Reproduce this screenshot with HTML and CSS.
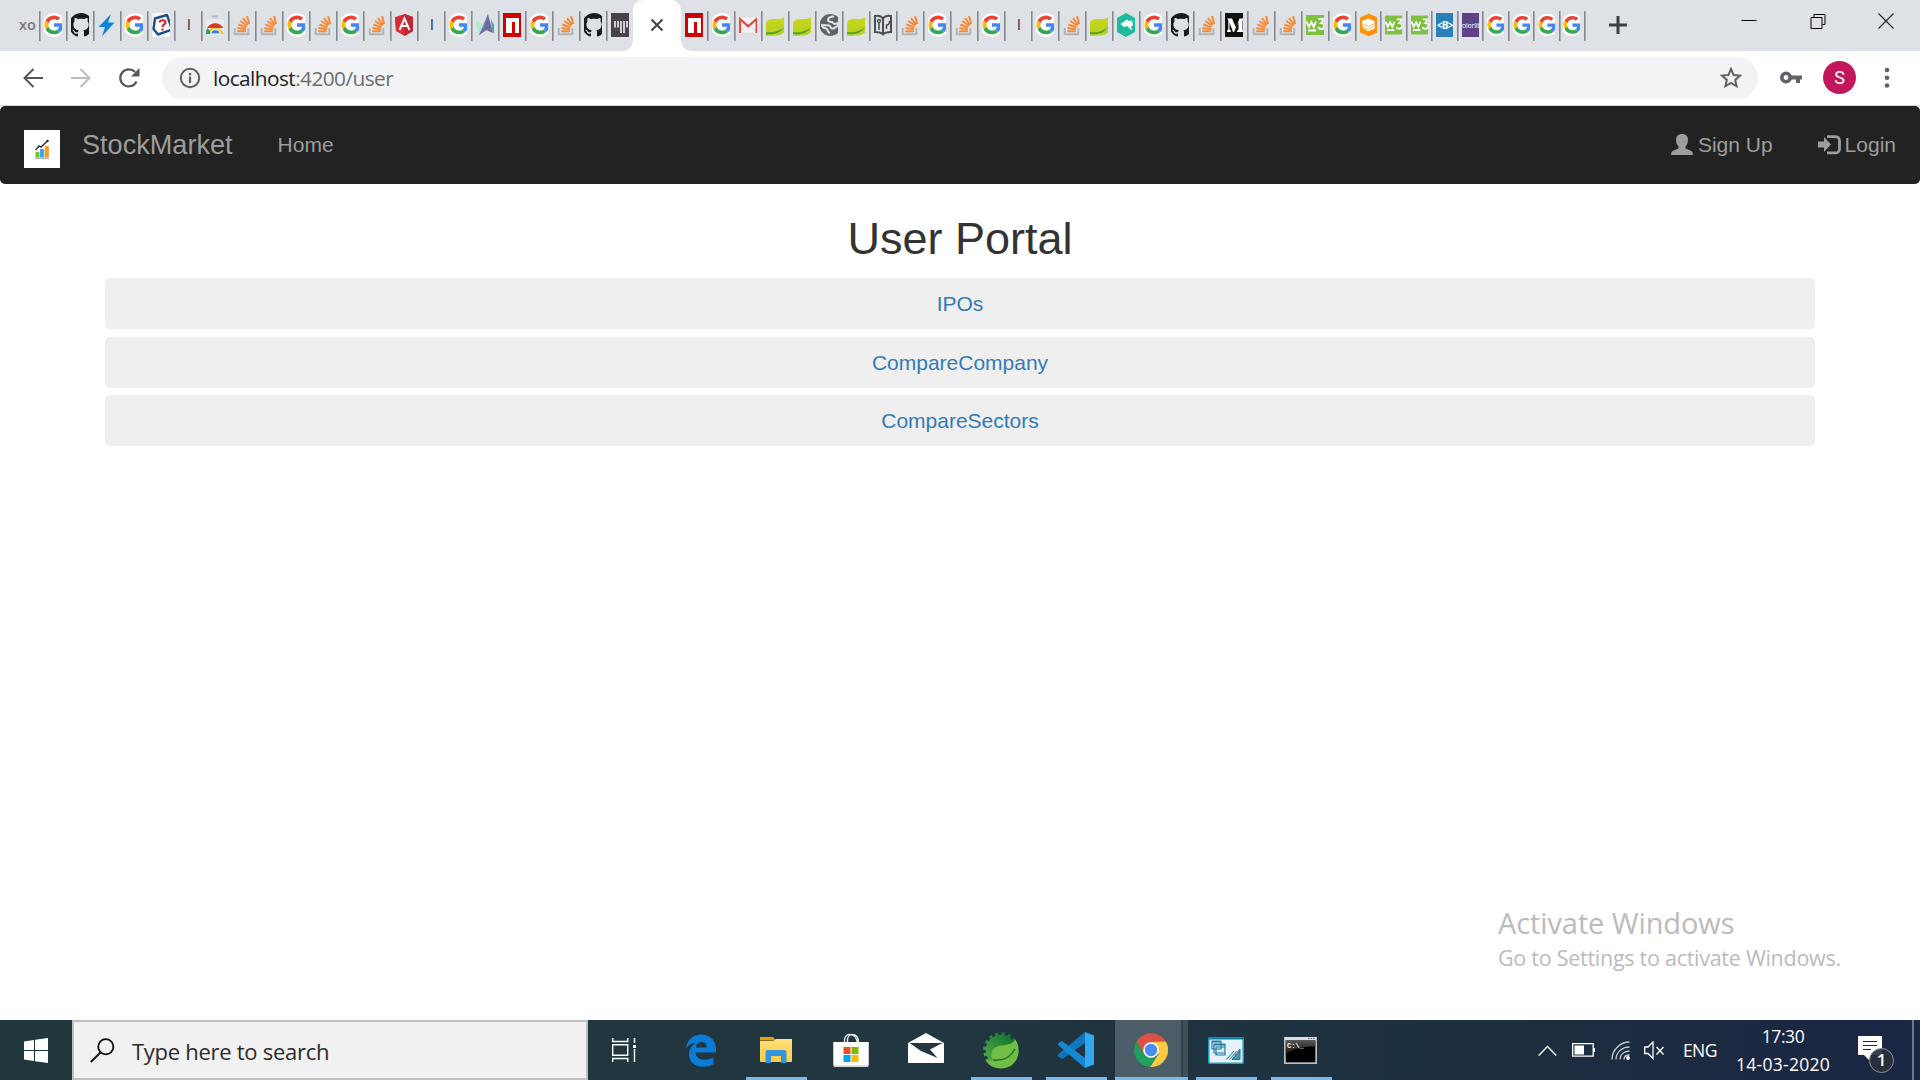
FILE: index.html
```html
<!DOCTYPE html>
<html lang="en">
<head>
<meta charset="utf-8">
<title>StockMarket</title>
<link rel="stylesheet" href="styles.css">
</head>
<body>
<svg class="defs" width="0" height="0" aria-hidden="true">
  <defs>
    <linearGradient id="bagShade" x1="0" y1="0" x2="0" y2="1"><stop offset="0" stop-color="#fff"/><stop offset="1" stop-color="#d9dbdd"/></linearGradient>
    <linearGradient id="leafShade" x1="0" y1="0" x2="0" y2="1"><stop offset="0" stop-color="#c8d816"/><stop offset="1" stop-color="#b4cf26"/></linearGradient>
    <linearGradient id="gearShade" x1="0" y1="1" x2="1" y2="0"><stop offset="0" stop-color="#56b146"/><stop offset="1" stop-color="#0c6b2f"/></linearGradient>
    <linearGradient id="folderShade" x1="0" y1="0" x2="0" y2="1"><stop offset="0" stop-color="#ffe07a"/><stop offset="1" stop-color="#fccb45"/></linearGradient>
    <linearGradient id="cmdShade" x1="0" y1="0" x2="0" y2="1"><stop offset="0" stop-color="#555"/><stop offset="1" stop-color="#111"/></linearGradient>
    <g id="google">
      <circle cx="12" cy="12" r="11.8" fill="#fff"/>
      <g transform="translate(2.5 2.4) scale(.395)">
        <path fill="#EA4335" d="M24 9.5c3.54 0 6.71 1.22 9.21 3.6l6.85-6.85C35.9 2.38 30.47 0 24 0 14.62 0 6.51 5.38 2.56 13.22l7.98 6.19C12.43 13.72 17.74 9.5 24 9.5z"/>
        <path fill="#4285F4" d="M46.98 24.55c0-1.57-.15-3.09-.38-4.55H24v9.02h12.94c-.58 2.96-2.26 5.48-4.78 7.18l7.73 6c4.51-4.18 7.09-10.36 7.09-17.65z"/>
        <path fill="#FBBC05" d="M10.53 28.59c-.48-1.45-.76-2.99-.76-4.59s.27-3.14.76-4.59l-7.98-6.19C.92 16.46 0 20.12 0 24c0 3.88.92 7.54 2.56 10.78l7.97-6.19z"/>
        <path fill="#34A853" d="M24 48c6.48 0 11.93-2.13 15.89-5.81l-7.73-6c-2.15 1.45-4.92 2.3-8.16 2.3-6.26 0-11.57-4.22-13.47-9.91l-7.98 6.19C6.51 42.62 14.62 48 24 48z"/>
      </g>
    </g>
    <path id="github" fill="#17191c" transform="scale(1.5)" d="M8 0C3.58 0 0 3.58 0 8c0 3.54 2.29 6.53 5.47 7.59.4.07.55-.17.55-.38 0-.19-.01-.82-.01-1.49-2.01.37-2.53-.49-2.69-.94-.09-.23-.48-.94-.82-1.13-.28-.15-.68-.52-.01-.53.63-.01 1.08.58 1.23.82.72 1.21 1.87.87 2.33.66.07-.52.28-.87.51-1.07-1.78-.2-3.64-.89-3.64-3.95 0-.87.31-1.59.82-2.15-.08-.2-.36-1.02.08-2.12 0 0 .67-.21 2.2.82.64-.18 1.32-.27 2-.27s1.36.09 2 .27c1.53-1.04 2.2-.82 2.2-.82.44 1.1.16 1.92.08 2.12.51.56.82 1.27.82 2.15 0 3.07-1.87 3.75-3.65 3.95.29.25.54.73.54 1.48 0 1.07-.01 1.93-.01 2.2 0 .21.15.46.55.38A8.01 8.01 0 0 0 16 8c0-4.42-3.58-8-8-8z"/>
    <path id="bolt" fill="#0f83dc" d="M15 1 2.500 14H9L6 23.500 18.500 9.500H12z"/>
    <g id="quiz">
      <rect x="2" y="0" width="18" height="24" fill="#f4f6f8"/>
      <path d="M5 5.500 17 2l5 14.500L8 21.500 3.500 16z" fill="#fff" stroke="#1c4f8c" stroke-width="2.400" stroke-linejoin="round"/>
      <path d="M9.500 9.500c0-3 6-3 6 0 0 2-3 1.800-3 4.500M12.500 15.500v2" fill="none" stroke="#dc1f26" stroke-width="2.200"/>
    </g>
    <g id="webstore">
      <path d="M8 3.500h6" stroke="#b3b6ba" stroke-width="2"/>
      <path d="M1 6.500h22V21H1z" fill="#e9ebed"/>
      <path d="M2.500 21a9.300 9.300 0 0 1 17.500 0z" fill="#fbc116"/>
      <path d="M3 15a9.500 9.500 0 0 1 16.500 0z" fill="#db3a2c"/>
      <path d="M2 21c0-3 .5-5 1.500-6L8 21z" fill="#26a14f"/>
      <path d="M6.800 21a4.700 4.700 0 0 1 9.400 0z" fill="#3f80e4" stroke="#fff" stroke-width="1.200"/>
    </g>
    <g id="overflow" fill="none">
      <path d="M3.700 15v6.300h13.600V15" stroke="#b0b3b7" stroke-width="1.900"/>
      <path d="M6.200 18.300h8.600M6.400 15l8.500 1.200M7.300 11.500l8 2.900M9.200 8l7 4.800M12 5l5 6.800M16 3l2.200 8" stroke="#f58a36" stroke-width="2"/>
    </g>
    <g id="angular">
      <path d="M11.500 1 21.500 4.500 20 18l-8.500 5L3 18 1.500 4.500z" fill="#dd2b33"/>
      <path d="M11.500 1 21.500 4.500 20 18l-8.500 5z" fill="#bf2735"/>
      <path d="m6.500 17 5-11.500L16.500 17M8.500 13h6" fill="none" stroke="#fff" stroke-width="2"/>
    </g>
    <g id="polygon">
      <path d="M2 8l7 3-4 11z" fill="#a6edc8"/><path d="M14 1 5 22l9-6z" fill="#7c80b8"/>
      <path d="M14 1l5 19-7-3-7 5 5-8z" fill="#6a6e9e"/><path d="M17 6l3 6v9l-2-3z" fill="#5f9aa0"/>
    </g>
    <g id="npm"><path fill="#cb0303" d="M0 0h24v24H0z"/><path fill="#fff" d="M5 5h13v15h-4V9h-3v11H5z"/></g>
    <g id="bars"><path fill="#49424c" d="M0 0h24v24H0z"/><path d="M6 8v6.500M9 8v6.500M12 8v12M15 8v12M18 8v6.500" stroke="#fff" stroke-width="1.500"/></g>
    <g id="gmail">
      <path d="M2 4.500h18v15H2z" fill="#f2f2f2"/><path d="m2 19 9-8 9 8" fill="none" stroke="#d5d5d5"/>
      <path d="M3.100 20V6l8 7.300L19.500 6v14" fill="none" stroke="#dc4a3c" stroke-width="2"/>
    </g>
    <g id="spring">
      <path d="M2 11c0-5 5-5 9-5 4 0 7 0 9-2v15c-3 5-11 3-18 4z" fill="url(#leafShade)"/>
      <path d="M2 19c7 1 14-1 18-5-3 6-10 8-18 7z" fill="#5f9e2c"/>
    </g>
    <g id="globe">
      <circle cx="12.500" cy="12" r="11" fill="#5f6368"/>
      <path d="M16 3.500c-3 0-6 1-6 3.500 0 1.500 2 2 4 2 1 0 1 2 3 2l3-1v3c-2 0-3 3-6 2.500-2-.5-1-2.500-3-3-2.500-.6-5 0-7-.500 0 3 2 3 4 3.500 2.500.6 1 4 4 4.500" fill="none" stroke="#dee1e6" stroke-width="2"/>
    </g>
    <g id="book" fill="none" stroke="#4b4d50" stroke-width="2">
      <path d="M3 3c3-.5 6 0 8 2.500 2-2.500 5-3 8-2.500v16c-3 0-6 0-8 2.500-2-2.500-5-2.500-8-2.500zM11 6v14"/>
      <path d="M7 9v8M14.500 16v-4c3 0 3-2 3-4" stroke-width="1.500"/><circle cx="7" cy="8" r="1.500" stroke-width="1.300"/>
    </g>
    <g id="teal"><path fill="#1abc9c" d="m11 0 10 5.500v13L11 24 1 18.500v-13z"/><path fill="#fff" d="M5.500 11 12 6.500l2 1.500 3-.5 1 5-2 1 1 4-5-4.500-3 1z"/></g>
    <g id="medium"><path fill="#12100e" d="M0 0h24v24H0z"/><path d="M4 5.500h5l4 9 3.500-9H21v1.300l-1.500 1v9l1.500 1v1.200h-7v-1.200l1.500-1V9l-4.500 10h-1L6.500 9.500v6.800l1.500 1.500V19H4v-1.200l1.300-1.500V7z" fill="#fff"/></g>
    <g id="w3">
      <path fill="#80c040" d="M0 2h24v20H0z"/>
      <path d="M2.500 8.500 5 14l2.500-5 2.300 5 2.200-5.500M14.500 6h6L17 10c5 0 4 6 0 6-2 0-2.500-1-2.500-2M4 17.500h8" fill="none" stroke="#fff" stroke-width="1.800"/>
    </g>
    <g id="hive"><path fill="#fb960b" d="m11 0 9 4v16l-9 4-9-4V4z"/><path fill="#ff8f0a" d="m11 0 9 4v16l-9 4z"/><path fill="#fff" d="m4 8 7-3 6.500 3v8L11 18.500 5 15.500z"/><path d="m4.500 11 6.500 2.500 6.500-3M5 14.500l6 2 6-3" fill="none" stroke="#ffb54a"/></g>
  </defs>
</svg>

<div class="screen">
  <header class="tabstrip">
    <div class="tab tab-first"><span>xo</span></div>
    <div class="tab"><svg viewBox="2 0 18 24"><use href="#google"/></svg></div>
    <div class="tab"><svg viewBox="2 0 18 24"><use href="#github"/></svg></div>
    <div class="tab"><svg viewBox="2 0 18 24"><use href="#bolt"/></svg></div>
    <div class="tab"><svg viewBox="2 0 18 24"><use href="#google"/></svg></div>
    <div class="tab"><svg viewBox="2 0 18 24"><use href="#quiz"/></svg></div>
    <div class="tab tab-text"><span>l</span></div>
    <div class="tab"><svg viewBox="2 0 18 24"><use href="#webstore"/></svg></div>
    <div class="tab"><svg viewBox="2 0 18 24"><use href="#overflow"/></svg></div>
    <div class="tab"><svg viewBox="2 0 18 24"><use href="#overflow"/></svg></div>
    <div class="tab"><svg viewBox="2 0 18 24"><use href="#google"/></svg></div>
    <div class="tab"><svg viewBox="2 0 18 24"><use href="#overflow"/></svg></div>
    <div class="tab"><svg viewBox="2 0 18 24"><use href="#google"/></svg></div>
    <div class="tab"><svg viewBox="2 0 18 24"><use href="#overflow"/></svg></div>
    <div class="tab"><svg viewBox="2 0 18 24"><use href="#angular"/></svg></div>
    <div class="tab tab-text"><span>l</span></div>
    <div class="tab"><svg viewBox="2 0 18 24"><use href="#google"/></svg></div>
    <div class="tab"><svg viewBox="2 0 18 24"><use href="#polygon"/></svg></div>
    <div class="tab"><svg viewBox="2 0 18 24"><use href="#npm"/></svg></div>
    <div class="tab"><svg viewBox="2 0 18 24"><use href="#google"/></svg></div>
    <div class="tab"><svg viewBox="2 0 18 24"><use href="#overflow"/></svg></div>
    <div class="tab"><svg viewBox="2 0 18 24"><use href="#github"/></svg></div>
    <div class="tab tab-before"><svg viewBox="2 0 18 24"><use href="#bars"/></svg></div>
    <div class="tab-active"><svg viewBox="0 0 14 14"><path d="m1.500 1.500 11 11m0-11-11 11" stroke="#45494d" stroke-width="2.200"/></svg></div>
    <div class="tab"><svg viewBox="2 0 18 24"><use href="#npm"/></svg></div>
    <div class="tab"><svg viewBox="2 0 18 24"><use href="#google"/></svg></div>
    <div class="tab"><svg viewBox="2 0 18 24"><use href="#gmail"/></svg></div>
    <div class="tab"><svg viewBox="2 0 18 24"><use href="#spring"/></svg></div>
    <div class="tab"><svg viewBox="2 0 18 24"><use href="#spring"/></svg></div>
    <div class="tab"><svg viewBox="2 0 18 24"><use href="#globe"/></svg></div>
    <div class="tab"><svg viewBox="2 0 18 24"><use href="#spring"/></svg></div>
    <div class="tab"><svg viewBox="2 0 18 24"><use href="#book"/></svg></div>
    <div class="tab"><svg viewBox="2 0 18 24"><use href="#overflow"/></svg></div>
    <div class="tab"><svg viewBox="2 0 18 24"><use href="#google"/></svg></div>
    <div class="tab"><svg viewBox="2 0 18 24"><use href="#overflow"/></svg></div>
    <div class="tab"><svg viewBox="2 0 18 24"><use href="#google"/></svg></div>
    <div class="tab tab-text"><span>l</span></div>
    <div class="tab"><svg viewBox="2 0 18 24"><use href="#google"/></svg></div>
    <div class="tab"><svg viewBox="2 0 18 24"><use href="#overflow"/></svg></div>
    <div class="tab"><svg viewBox="2 0 18 24"><use href="#spring"/></svg></div>
    <div class="tab"><svg viewBox="2 0 18 24"><use href="#teal"/></svg></div>
    <div class="tab"><svg viewBox="2 0 18 24"><use href="#google"/></svg></div>
    <div class="tab"><svg viewBox="2 0 18 24"><use href="#github"/></svg></div>
    <div class="tab"><svg viewBox="2 0 18 24"><use href="#overflow"/></svg></div>
    <div class="tab"><svg viewBox="2 0 18 24"><use href="#medium"/></svg></div>
    <div class="tab"><svg viewBox="2 0 18 24"><use href="#overflow"/></svg></div>
    <div class="tab"><svg viewBox="2 0 18 24"><use href="#overflow"/></svg></div>
    <div class="tab"><svg viewBox="2 0 18 24"><use href="#w3"/></svg></div>
    <div class="tab"><svg viewBox="2 0 18 24"><use href="#google"/></svg></div>
    <div class="tab tab-slim"><svg viewBox="2 0 18 24"><use href="#hive"/></svg></div>
    <div class="tab tab-slim"><svg viewBox="2 0 18 24"><use href="#w3"/></svg></div>
    <div class="tab tab-slim"><svg viewBox="2 0 18 24"><use href="#w3"/></svg></div>
    <div class="tab tab-slim"><span class="chip chip-b">&lt;B&gt;</span></div>
    <div class="tab tab-slim"><span class="chip chip-c">colorlib</span></div>
    <div class="tab tab-slim"><svg viewBox="2 0 18 24"><use href="#google"/></svg></div>
    <div class="tab tab-slim"><svg viewBox="2 0 18 24"><use href="#google"/></svg></div>
    <div class="tab tab-slim"><svg viewBox="2 0 18 24"><use href="#google"/></svg></div>
    <div class="tab tab-slim"><svg viewBox="2 0 18 24"><use href="#google"/></svg></div>
    <svg class="new-tab" viewBox="0 0 18 18"><path d="M9 0v18M0 9h18" stroke="#3c4043" stroke-width="3"/></svg>
    <div class="window-buttons">
      <svg viewBox="0 0 15 16"><path d="M0 7.500h15" stroke="#000"/></svg>
      <svg viewBox="0 0 15 16"><path d="M.5 4.500h11v11H.5zM3.500 4V1.500h11v10H12" fill="none" stroke="#000"/></svg>
      <svg viewBox="0 0 15 16"><path d="m0 .5 15 15m0-15-15 15" stroke="#222" stroke-width="1.100"/></svg>
    </div>
  </header>

  <div class="toolbar">
    <svg class="nav-icon" viewBox="0 0 20 20"><path d="M20 10H1.500M10.500 1 1.500 10l9 9" fill="none" stroke="#54585c" stroke-width="2"/></svg>
    <svg class="nav-icon" viewBox="0 0 20 20"><path d="M0 10h18.500M9.500 1l9 9-9 9" fill="none" stroke="#babcbe" stroke-width="2"/></svg>
    <svg class="nav-icon" viewBox="0 0 20 20"><path d="M17.500 13.500A8.500 8.500 0 1 1 16 4.100" fill="none" stroke="#54585c" stroke-width="2.200"/><path d="M20.500 0v8.500H12z" fill="#54585c"/></svg>
    <div class="omnibox">
      <svg class="info" viewBox="0 0 22 22"><circle cx="11" cy="11" r="9.200" fill="none" stroke="#5f6368" stroke-width="2"/><path d="M11 9.500V16M11 6v2.200" stroke="#5f6368" stroke-width="2.200"/></svg>
      <span class="url">localhost<span class="url-path">:4200/user</span></span>
      <svg class="star" viewBox="0 0 22 21"><path d="m11 2 2.600 6 6.400.6-4.800 4.300 1.400 6.300L11 15.900l-5.600 3.300 1.400-6.300L2 8.600 8.400 8z" fill="none" stroke="#5f6368" stroke-width="2"/></svg>
    </div>
    <svg class="key" viewBox="0 0 22 13"><circle cx="6" cy="6.500" r="4.200" fill="none" stroke="#5f6368" stroke-width="3.600"/><path d="M10 4.500h12v4h-2V12h-4V8.500h-6z" fill="#5f6368"/></svg>
    <div class="avatar">S</div>
    <svg class="dots" viewBox="0 0 6 22"><g fill="#5f6368"><circle cx="3" cy="3" r="2.300"/><circle cx="3" cy="10.800" r="2.300"/><circle cx="3" cy="18.500" r="2.300"/></g></svg>
  </div>

  <nav class="navbar">
    <svg class="logo" viewBox="0 0 36 38">
      <path fill="#fff" d="M0 0h36v38H0z"/><path fill="#7cc31e" d="M11.500 22h4v5.500h-4z"/><path fill="#39a8ee" d="M16 19h4.200v8.500H16z"/><path fill="#fb9a15" d="M20.800 16h4v11.500h-4z"/>
      <path d="M11 28.300h14" stroke="#a9adb1" stroke-width="1.200"/><path d="m11.500 20 3.500-4 2 1 6.500-6" fill="none" stroke="#26354a" stroke-width="1.500"/><circle cx="23.500" cy="11" r="1.300" fill="#26354a"/>
    </svg>
    <a class="brand">StockMarket</a>
    <a class="home">Home</a>
    <a class="signup"><svg class="user-icon" viewBox="0 0 22 21"><path d="M11 0c4 0 6 2.500 6 6 0 3-1.200 5-2.500 6.500v1.800c2 1.500 7 2.300 7.300 4.700v2H.2v-2c.3-2.400 5.300-3.200 7.300-4.700v-1.800C6.200 11 5 9 5 6c0-3.500 2-6 6-6z" fill="#9d9d9d"/></svg>Sign Up</a>
    <a class="login"><svg class="login-icon" viewBox="0 0 23 20"><path d="M0 6.500h6V2l7 7.500L6 17v-4.500H0z" fill="#9d9d9d"/><path d="M9 1.600h8.500a4 4 0 0 1 4 4v8.300a4 4 0 0 1-4 4H9" fill="none" stroke="#9d9d9d" stroke-width="2.800"/></svg>Login</a>
  </nav>

  <main class="portal">
    <h1>User Portal</h1>
    <ul class="links">
      <li><a>IPOs</a></li>
      <li><a>CompareCompany</a></li>
      <li><a>CompareSectors</a></li>
    </ul>
  </main>

  <div class="watermark">
    <p class="watermark-title">Activate Windows</p>
    <p class="watermark-text">Go to Settings to activate Windows.</p>
  </div>

  <footer class="taskbar">
    <div class="start"><svg width="24" height="25" viewBox="0 0 24 25"><path fill="#fff" d="M0 3.500 10 2v10H0zM11 1.800 24 0v12H11zM0 13h10v10L0 21.500zM11 13h13v12l-13-1.800z"/></svg></div>
    <div class="search">
      <svg width="25" height="25" viewBox="0 0 25 25"><circle cx="15.800" cy="8.800" r="7.600" fill="none" stroke="#111" stroke-width="1.800"/><path d="M10.500 14.500.8 24" stroke="#111" stroke-width="1.900"/></svg>
      <span>Type here to search</span>
    </div>
    <div class="task-view"><svg width="25" height="24" viewBox="0 0 25 24"><path d="M.7 0v3.500h15V0M.7 24v-3.500h15V24M.7 6.800h15v10.400H.7zM22.500 0v5M22.500 11v13" fill="none" stroke="#fff" stroke-width="1.400"/><path fill="#fff" d="M21 7h3v3h-3z"/></svg></div>

    <div class="app"><svg width="32" height="33" viewBox="0 0 32 33"><path fill="#0a7cd8" d="M1 14.500C2 5.500 8.500.5 16 .5c9.500 0 15 6.500 15 14.500v3.500H10.500c.3 5 4.500 7.200 9 7.200 3.800 0 6.500-1 8.800-2.400v7c-3 1.700-6.300 2.500-10.300 2.500C9.500 32.800 4 27.500 4 20.500 4 15 7 11 11.500 8.800 7 9 3.500 11 1 14.500zM10.800 13.500h11C21.800 10 20 8 16.500 8s-5.400 2.500-5.700 5.500z"/></svg></div>
    <div class="app open"><svg width="32" height="28" viewBox="0 0 32 28"><path fill="#e3a008" d="M0 1h13l3 3.500H0z"/><path fill="url(#folderShade)" d="M0 5h13l3-2h16v22a1 1 0 0 1-1 1H1a1 1 0 0 1-1-1z"/><path fill="#3795dd" d="M5.500 16a2 2 0 0 1 2-2h17a2 2 0 0 1 2 2v11H21v-7h-10v7H5.500z"/></svg></div>
    <div class="app"><svg width="36" height="34" viewBox="0 0 36 34"><path d="M11.500 10V7c0-3 2-5.500 5-5.500s7 2 8 8M14.500 10V7c0-3 2-5.500 4.500-5.500 4 0 6.500 3 6.500 8" fill="none" stroke="#e6e8e9" stroke-width="1.400"/><path fill="url(#bagShade)" d="M.5 9h35v24a1 1 0 0 1-1 1h-33a1 1 0 0 1-1-1z"/><path fill="#fff" d="M.5 9h35v23H.5z"/><path fill="#f25022" d="M10.500 14h7v7h-7z"/><path fill="#7fba00" d="M18.500 14h7v7h-7z"/><path fill="#00a4ef" d="M10.500 22h7v7h-7z"/><path fill="#ffb900" d="M18.500 22h7v7h-7z"/></svg></div>
    <div class="app mail"><svg width="36" height="30" viewBox="0 0 36 30"><path fill="#fff" d="M0 10 18 0l18 10v20H0z"/><path fill="#223740" d="M1.500 10h33L22 16.500l7.500 8.500L13 18z"/></svg></div>
    <div class="app open"><svg width="36" height="37" viewBox="0 0 36 37"><circle cx="18" cy="18" r="15.300" fill="url(#gearShade)"/><circle cx="18" cy="18" r="16.300" fill="none" stroke="url(#gearShade)" stroke-width="3" stroke-dasharray="3.200 3.200"/><path fill="#72bd44" d="M2 27c2 5 8 9.500 16 9.500 10 0 17.500-7 17.500-18 0-5-1-8-3.500-11C28 17 10 9 8.500 22c-.4 3 .5 5 1.500 6-3 1-6 1-8-1z"/><path d="M10 28c10 1 18-3 22-11" fill="none" stroke="#1a7936" stroke-width="1.600"/></svg></div>
    <div class="app open"><svg width="36" height="36" viewBox="0 0 36 36"><path fill="#1176bd" d="M27 0v11L4.500 27 0 24.500v-2z"/><path fill="#1688d2" d="m4 9 23 17v10L0 13v-1.500z"/><path fill="#30a8f1" d="m27 0 9 3.500v29L27 36z"/></svg></div>
    <div class="app open current"><svg width="34" height="34" viewBox="0 0 34 34"><path fill="#e04f43" d="M2.500 8.500a17 17 0 0 1 29.200 0L17 9.500 9.500 21z"/><path fill="#fccb44" d="M31.700 8.500A17 17 0 0 1 16 34l8.500-13L17 9z"/><path fill="#1fa15d" d="M2.500 8.500A17 17 0 0 0 16 34l6-10-12-2z"/><circle cx="17" cy="17" r="7.800" fill="#fff"/><circle cx="17" cy="17" r="6.200" fill="#4c8bf5"/></svg></div>
    <div class="app open"><svg width="36" height="27" viewBox="0 0 36 27"><rect x=".8" y=".8" width="34.400" height="25.400" rx="1" fill="#e5f3f8" stroke="#219fc4" stroke-width="1.600"/><path d="M.8 1.500h34.400" stroke="#087da5" stroke-width="2"/><g fill="#dcebf2" stroke="#277fa4" stroke-width="1.200"><path d="M4 4h9v8H4zM4 5h9M6 7h11v9H6zM6 8h11M8 10h9v8H8z"/></g><path d="M18.500 22.500 26 14M21.500 22.500l7-8M24 22.500h8V12z" fill="#4b91b2" stroke="#247499"/></svg></div>
    <div class="app open"><svg width="33" height="27" viewBox="0 0 33 27"><path fill="#b8bcc0" d="M0 0h33v27H0z"/><path fill="#ddd" d="M1 0h31v3H1z"/><path d="M24 1.500h7" stroke="#667" stroke-dasharray="1.500 1"/><path fill="#000" d="M1.800 3.500h29.500v21.800H1.800z"/><path fill="url(#cmdShade)" d="M1.800 3.500h29.500v6C18 9.500 7 12 1.800 18z"/><text x="3" y="10.500" class="prompt">C:\_</text></svg></div>

    <div class="tray">
      <svg class="chevron" width="19" height="11" viewBox="0 0 19 11"><path d="m.7 10.500 8.800-9 8.800 9" fill="none" stroke="#fff" stroke-width="1.300"/></svg>
      <svg class="battery" width="23" height="14" viewBox="0 0 23 14"><path d="M.7.7h20.500v12.500H.7zM22.500 5v4" fill="none" stroke="#fff" stroke-width="1.300"/><path fill="#fff" d="M2.500 2.500H12v9H2.500z"/></svg>
      <svg class="wifi" width="19" height="19" viewBox="0 0 19 19"><g fill="none" stroke="#c7ccd2" stroke-width="1.300"><path d="M1 18.500C1 9 9 1 18.500 1M5 18.500C5 11.500 11 6 18.500 6M9 18.500c0-5 4-8.500 9.500-8.500M13 18.500c0-3 2-4.500 5.500-4.500"/></g><circle cx="17" cy="17" r="1.900" fill="#fff"/></svg>
      <svg class="speaker" width="21" height="19" viewBox="0 0 21 19"><path d="M.7 6v6.500H4l5 5V1L4 6zM12.500 6l7 7.500m0-7.500-7 7.500" fill="none" stroke="#fff" stroke-width="1.300"/></svg>
      <span class="lang">ENG</span>
      <div class="clock"><span>17:30</span><span class="date">14-03-2020</span></div>
      <div class="notify">
        <svg width="24" height="24" viewBox="0 0 24 24"><path fill="#fff" d="M0 0h24v19H13l-2 5-5-5H0z"/><path d="M5 5.500h14M5 9.500h14M5 13.500h8" stroke="#1c2943" stroke-width="1.200"/></svg>
        <span class="badge">1</span>
      </div>
      <div class="peek"></div>
    </div>
  </footer>
</div>
</body>
</html>
```
FILE: styles.css
```css
* { box-sizing: border-box; }
body { margin: 0; background: #fff; font-family: "Liberation Sans", Arial, sans-serif; }
svg { display: block; flex: none; }
.defs { position: absolute; }
.screen { position: relative; display: flex; flex-direction: column; width: 1920px; height: 1080px; overflow: hidden; }

/* Tab strip */
.tabstrip { display: flex; align-items: flex-start; height: 51px; flex: none; background: #dee1e6; }
.tab { width: 27px; height: 30px; margin-top: 11px; padding: 2px 0 0 3.900px; flex: none; border-right: 1px solid #84888c; box-shadow: 1px 0 #a9acb1; overflow: hidden; }
.tab svg { width: 18px; height: 24px; overflow: hidden; }
.tab-first { width: 40px; padding: 0 0 0 19px; color: #77797c; font: 600 14.500px/27px "Open Sans", sans-serif; }
.tab-text { padding: 0 0 0 12px; color: #24324a; font: 15px/26px "Open Sans", sans-serif; }
.tab-text span { display: block; width: 4px; overflow: hidden; }
.tab-before { width: 26px; border: 0; box-shadow: none; }
.tab-slim { width: 25.44px; }
.tab-slim svg { width: 17px; }
.tab-active { position: relative; display: flex; justify-content: center; width: 48px; height: 51px; padding-top: 18px; flex: none; background: #fff; border-radius: 10px 10px 0 0; }
.tab-active svg { width: 14px; height: 14px; }
.tab-active::before, .tab-active::after { content: ""; position: absolute; bottom: 0; width: 10px; height: 10px; }
.tab-active::before { left: -10px; background: radial-gradient(circle at 0 0, transparent 9.5px, #fff 10px); }
.tab-active::after { right: -10px; background: radial-gradient(circle at 100% 0, transparent 9.5px, #fff 10px); }
.chip { display: flex; justify-content: center; align-items: center; width: 17px; height: 24px; overflow: hidden; color: #fff; }
.chip-b { background: #2a80b9; font: bold 10px "Open Sans", sans-serif; letter-spacing: -.8px; }
.chip-c { background: #5f4187; font: 7px "Open Sans", sans-serif; letter-spacing: -.2px; }
.new-tab { width: 18px; height: 18px; margin: 16px 0 0 24px; }
.window-buttons { display: flex; gap: 52.500px; margin: 13px 26px 0 auto; }
.window-buttons svg { width: 16px; height: 16px; }

/* Toolbar */
.toolbar { display: flex; align-items: center; height: 55px; padding: 0 30px 1px 23px; flex: none; border-bottom: 1px solid #d3d5d8; }
.nav-icon { width: 20px; height: 20px; margin-right: 28px; overflow: visible; }
.omnibox { display: flex; align-items: center; width: 1596px; height: 42px; margin-left: -5px; padding: 0 16px 0 16.500px; border-radius: 21px; background: #f1f3f4; }
.info { width: 22px; height: 22px; }
.url { margin: 1px auto 0 12.500px; color: #202124; font: 20.8px/28px "Open Sans", sans-serif; letter-spacing: -.55px; }
.url-path { color: #6b6f73; }
.star { width: 22px; height: 21px; }
.key { width: 22px; height: 13px; margin-left: 22px; }
.avatar { width: 33px; height: 33px; margin-left: 21px; border-radius: 50%; background: #c2185b; color: #fff; text-align: center; font: 18px/33px Roboto, sans-serif; }
.dots { width: 6px; height: 22px; margin-left: auto; }

/* Navbar */
.navbar { display: flex; align-items: center; height: 78px; padding: 0 24px; flex: none; border-radius: 5px; background: #222; color: #9d9d9d; font-size: 21px; line-height: 30px; }
.logo { width: 36px; height: 38px; margin-top: 8px; }
.brand { margin-left: 22px; font-size: 27.1px; }
.home { margin-left: 45px; }
.signup { display: flex; align-items: center; margin-left: auto; }
.user-icon { width: 22px; height: 21px; margin: -2px 5px 0 0; }
.login { display: flex; align-items: center; margin-left: 45px; }
.login-icon { width: 23px; height: 20px; margin-right: 4px; }

/* Page */
.portal { padding: 30px 105px 0; text-align: center; }
h1 { margin: 0 0 15px; color: #333; font-size: 45px; font-weight: 500; line-height: 49px; }
.links { display: flex; flex-direction: column; gap: 7.6px; margin: 0; padding: 0; list-style: none; }
.links li { height: 51px; border-radius: 5px; background: #efefef; color: #337ab7; font-size: 21px; line-height: 52px; }

.watermark { position: absolute; left: 1498px; top: 902px; color: #bbb; font-family: "Open Sans", sans-serif; white-space: nowrap; }
.watermark p { margin: 0; }
.watermark-title { font-size: 29px; line-height: 42px; letter-spacing: -.1px; }
.watermark-text { font-size: 21.5px; line-height: 28px; letter-spacing: -.27px; }

/* Taskbar */
.taskbar { display: flex; height: 60px; margin-top: auto; flex: none; background: linear-gradient(90deg, #21373e, #213640 50%, #1d2f40 78%, #1b2842 92%, #1a2743); font-family: "Open Sans", sans-serif; color: #fff; }
.start { display: flex; justify-content: center; align-items: center; width: 72px; }
.search { display: flex; align-items: center; gap: 17px; width: 516px; padding-left: 16px; border: 2px solid #bebfc0; background: #f1f1f1; color: #2b2b2b; font-size: 22px; }
.search span { margin-top: 1px; letter-spacing: -.28px; }
.task-view { display: flex; justify-content: center; align-items: center; width: 76px; padding-right: 3px; }
.app { position: relative; display: flex; justify-content: center; align-items: center; width: 75px; padding-right: 2px; }
.open::after { content: ""; position: absolute; left: 7px; bottom: 0; width: 61px; height: 3px; background: #76b9ed; }
.mail { padding-bottom: 4px; }
.current { background: linear-gradient(90deg, transparent 1px, #4d5d68 1px 67px, #31414d 67px 69px, #3f4e59 69px 74px, transparent 74px); }
.current::after { left: 1px; width: 73px; }
.prompt { fill: #fff; font: bold 7px "Liberation Mono", monospace; }
.tray { display: flex; align-items: center; margin-left: auto; font-size: 17.5px; }
.battery { margin-left: 15px; }
.wifi { margin-left: 16px; }
.speaker { margin-left: 14px; }
.lang { width: 35px; margin-left: 18px; letter-spacing: -.6px; }
.clock { display: flex; flex-direction: column; align-items: center; width: 96px; margin-left: 17px; line-height: 28px; letter-spacing: -.4px; }
.date { letter-spacing: .25px; }
.notify { position: relative; margin: -5px 0 0 27px; }
.badge { position: absolute; left: 11px; top: 12px; width: 25px; height: 25px; border: 1.500px solid #8b8f96; border-radius: 50%; background: #2b303aee; text-align: center; font: 600 17px/22px "Open Sans", sans-serif; }
.peek { width: 2px; height: 60px; margin: 0 6px 0 30px; background: #6e7788; }
```
